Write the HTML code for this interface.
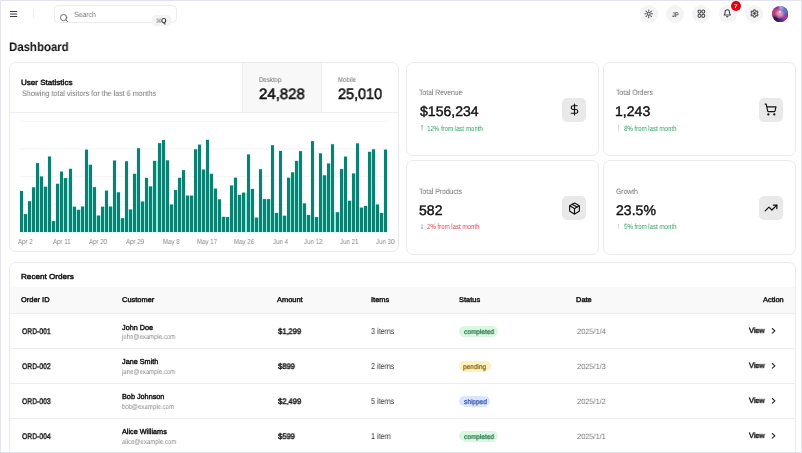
<!DOCTYPE html>
<html><head><meta charset="utf-8"><style>
html,body{margin:0;padding:0;}
body{width:802px;height:453px;position:relative;overflow:hidden;background:#fff;font-family:"Liberation Sans",sans-serif;}
.t{position:absolute;white-space:nowrap;text-rendering:geometricPrecision;will-change:transform;}
.frame{position:absolute;left:0;top:0;width:802px;height:453px;box-sizing:border-box;border:1px solid #e2e2f0;pointer-events:none}
</style></head><body>

<svg style="position:absolute;left:0;top:0" width="30" height="30"><g stroke="#3a3a3a" stroke-width="1.05" stroke-linecap="round"><line x1="10.4" x2="16.8" y1="11.4" y2="11.4"/><line x1="10.4" x2="16.8" y1="13.9" y2="13.9"/><line x1="10.4" x2="16.8" y1="16.4" y2="16.4"/></g></svg>
<div style="position:absolute;left:33px;top:10px;width:1px;height:8px;background:#ececec"></div>
<div style="position:absolute;left:54px;top:5px;width:122.8px;height:17.6px;border:1px solid #ececec;border-radius:4.5px;box-sizing:border-box"></div>
<svg style="position:absolute;left:59.3px;top:13.3px" width="10" height="10" viewBox="0 0 24 24" fill="none" stroke="#666" stroke-width="2.3" stroke-linecap="round"><circle cx="11" cy="11" r="7.5"/><path d="m21 21-4.3-4.3"/></svg>
<div style="position:absolute;left:152px;top:15px;width:18.6px;height:10.5px;background:#f3f3f3;border-radius:4px"></div>
<svg style="position:absolute;left:155.8px;top:17.6px" width="5.6" height="5.6" viewBox="0 0 24 24" fill="none" stroke="#aaa" stroke-width="3.5"><path d="M15 6v12a3 3 0 1 0 3-3H6a3 3 0 1 0 3 3V6a3 3 0 1 0-3 3h12a3 3 0 1 0-3-3"/></svg>
<div class="t" style="left:74.36px;top:11.00px;font-size:7.53px;line-height:7.53px;color:#7a7a7a;font-weight:400;transform:scaleX(0.9139);transform-origin:left top;">Search</div><div class="t" style="left:161.41px;top:18.00px;font-size:7.14px;line-height:7.14px;color:#333;font-weight:700;transform:scaleX(1.0000);transform-origin:left top;background:#f3f3f3;">Q</div><div style="position:absolute;left:639.7px;top:4.8px;width:18px;height:18px;border-radius:50%;background:#f4f4f4"></div><div style="position:absolute;left:666.2px;top:4.8px;width:18px;height:18px;border-radius:50%;background:#f4f4f4"></div><div style="position:absolute;left:692.4px;top:4.8px;width:18px;height:18px;border-radius:50%;background:#f4f4f4"></div><div style="position:absolute;left:719.0px;top:4.8px;width:18px;height:18px;border-radius:50%;background:#f4f4f4"></div><div style="position:absolute;left:745.0px;top:4.8px;width:18px;height:18px;border-radius:50%;background:#f4f4f4"></div><svg style="position:absolute;left:0;top:0" width="802" height="30" fill="none" stroke="#555" stroke-width="1.05" stroke-linecap="round"><circle cx="648.7" cy="13.8" r="1.55"/><path d="M651.50 13.80L652.60 13.80M650.68 15.78L651.46 16.56M648.70 16.60L648.70 17.70M646.72 15.78L645.94 16.56M645.90 13.80L644.80 13.80M646.72 11.82L645.94 11.04M648.70 11.00L648.70 9.90M650.68 11.82L651.46 11.04"/></svg><div class="t" style="left:671.89px;top:13.00px;font-size:6.81px;line-height:6.81px;color:#505050;font-weight:700;transform:scaleX(0.8031);transform-origin:left top;background:#f4f4f4;">JP</div><svg style="position:absolute;left:0;top:0" width="802" height="30" fill="none" stroke="#444" stroke-width="1.05"><ellipse cx="699.5" cy="11.6" rx="1.5" ry="1.6"/><ellipse cx="703.3" cy="11.6" rx="1.5" ry="1.6"/><ellipse cx="699.5" cy="15.8" rx="1.5" ry="1.6"/><ellipse cx="703.3" cy="15.8" rx="1.5" ry="1.6"/></svg><svg style="position:absolute;left:723.4px;top:9.4px" width="8.6" height="8.6" viewBox="0 0 24 24" fill="none" stroke="#444" stroke-width="3" stroke-linecap="round" stroke-linejoin="round"><path d="M6 8a6 6 0 0 1 12 0c0 7 3 9 3 9H3s3-2 3-9"/><path d="M10.3 21a1.94 1.94 0 0 0 3.4 0"/></svg><div style="position:absolute;left:730.9px;top:0.9px;width:9.9px;height:9.9px;border-radius:50%;background:#e0000f"></div><div class="t" style="left:734.04px;top:5.00px;font-size:5.22px;line-height:5.22px;color:#fff;font-weight:700;transform:scaleX(1.2234);transform-origin:left top;background:#e0000f;">7</div><svg style="position:absolute;left:749.6px;top:9.4px" width="9" height="9" viewBox="0 0 24 24" fill="none" stroke="#555" stroke-width="3.2" stroke-linecap="round" stroke-linejoin="round"><path d="M12.22 2h-.44a2 2 0 0 0-2 2v.18a2 2 0 0 1-1 1.73l-.43.25a2 2 0 0 1-2 0l-.15-.08a2 2 0 0 0-2.730.73l-.22.38a2 2 0 0 0 .73 2.73l.15.1a2 2 0 0 1 1 1.72v.51a2 2 0 0 1-1 1.740l-.15.09a2 2 0 0 0-.73 2.73l.22.38a2 2 0 0 0 2.73.73l.15-.08a2 2 0 0 1 2 0l.43.25a2 2 0 0 1 1 1.73V20a2 2 0 0 0 2 2h.44a2 2 0 0 0 2-2v-.18a2 2 0 0 1 1-1.73l.43-.25a2 2 0 0 1 2 0l.15.08a2 2 0 0 0 2.73-.73l.22-.39a2 2 0 0 0-.73-2.73l-.15-.08a2 2 0 0 1-1-1.74v-.5a2 2 0 0 1 1-1.74l.15-.09a2 2 0 0 0 .73-2.73l-.22-.38a2 2 0 0 0-2.73-.73l-.15.08a2 2 0 0 1-2 0l-.43-.25a2 2 0 0 1-1-1.73V4a2 2 0 0 0-2-2z"/><circle cx="12" cy="12" r="2.2" fill="#555"/></svg><svg style="position:absolute;left:771.6px;top:5.9px" width="16.2" height="16.2" viewBox="0 0 16 16"><defs><clipPath id="av"><circle cx="8" cy="8" r="8"/></clipPath><filter id="bl" x="-50%" y="-50%" width="200%" height="200%"><feGaussianBlur stdDeviation="1.1"/></filter></defs><g clip-path="url(#av)"><rect width="16" height="16" fill="#6a3090"/><g filter="url(#bl)"><circle cx="3" cy="6" r="4" fill="#c03a7a"/><circle cx="8" cy="7.5" r="3.6" fill="#e898b4"/><circle cx="13" cy="5" r="3.2" fill="#5a78d0"/><circle cx="9" cy="1" r="2.5" fill="#a8b8e8"/><circle cx="4" cy="13.5" r="3.8" fill="#2a1858"/><circle cx="13" cy="12" r="3" fill="#a83898"/><circle cx="9" cy="14" r="2.5" fill="#4a2a8a"/></g><circle cx="8" cy="5.8" r="0.9" fill="#f4f0ff" opacity="0.9"/><circle cx="6" cy="11" r="0.5" fill="#e0d0f0" opacity="0.8"/></g></svg><div class="t" style="left:9.00px;top:41.00px;font-size:12.33px;line-height:12.33px;color:#111;font-weight:700;transform:scaleX(0.9274);transform-origin:left top;">Dashboard</div><div style="position:absolute;left:9.0px;top:61.95px;width:389.70px;height:190.45px;border:1px solid #ebebeb;border-radius:7px;box-sizing:border-box;background:#fff"></div><div style="position:absolute;left:242px;top:63.2px;width:80px;height:49.3px;background:#f8f8f8;border-left:1px solid #eeeeee;border-right:1px solid #eeeeee;box-sizing:border-box"></div><div style="position:absolute;left:10.2px;top:112px;width:387.4px;height:1px;background:#eeeeee"></div><div class="t" style="left:21.48px;top:79.00px;font-size:7.53px;line-height:7.53px;color:#171717;font-weight:400;transform:scaleX(1.0711);transform-origin:left top;-webkit-text-stroke:0.45px #171717;">User Statistics</div><div class="t" style="left:21.64px;top:90.00px;font-size:7.95px;line-height:7.95px;color:#777;font-weight:400;transform:scaleX(0.9021);transform-origin:left top;">Showing total visitors for the last 6 months</div><div class="t" style="left:258.71px;top:77.00px;font-size:6.99px;line-height:6.99px;color:#6e6e6e;font-weight:400;transform:scaleX(0.8709);transform-origin:left top;background:#f8f8f8;">Desktop</div><div class="t" style="left:337.61px;top:77.00px;font-size:6.99px;line-height:6.99px;color:#6e6e6e;font-weight:400;transform:scaleX(0.8709);transform-origin:left top;">Mobile</div><div class="t" style="left:259.03px;top:87.00px;font-size:15.18px;line-height:15.18px;color:#111;font-weight:400;transform:scaleX(0.9871);transform-origin:left top;-webkit-text-stroke:0.55px #111;background:#f8f8f8;">24,828</div><div class="t" style="left:337.75px;top:87.00px;font-size:15.18px;line-height:15.18px;color:#111;font-weight:400;transform:scaleX(0.9505);transform-origin:left top;-webkit-text-stroke:0.55px #111;">25,010</div><svg style="position:absolute;left:0;top:0" width="802" height="453"><g stroke="#f4f4f4" stroke-width="1"><line x1="19.5" x2="387.6" y1="204.30" y2="204.30"/><line x1="19.5" x2="387.6" y1="176.60" y2="176.60"/><line x1="19.5" x2="387.6" y1="148.90" y2="148.90"/><line x1="19.5" x2="387.6" y1="121.20" y2="121.20"/></g><g fill="none" stroke="#c8f7f1" stroke-width="1.0"><rect x="20" y="191.00" width="3" height="41.00"/><rect x="24" y="214.09" width="3" height="17.91"/><rect x="28" y="201.16" width="3" height="30.84"/><rect x="32" y="187.31" width="3" height="44.69"/><rect x="36" y="163.12" width="3" height="68.88"/><rect x="40" y="176.42" width="3" height="55.58"/><rect x="44" y="186.76" width="3" height="45.24"/><rect x="48" y="156.47" width="3" height="75.53"/><rect x="52" y="221.10" width="3" height="10.90"/><rect x="56" y="183.80" width="3" height="48.20"/><rect x="60" y="171.61" width="3" height="60.39"/><rect x="64" y="178.08" width="3" height="53.92"/><rect x="69" y="168.84" width="3" height="63.16"/><rect x="73" y="206.70" width="3" height="25.30"/><rect x="77" y="209.84" width="3" height="22.16"/><rect x="81" y="206.52" width="3" height="25.48"/><rect x="85" y="149.64" width="3" height="82.36"/><rect x="89" y="164.78" width="3" height="67.22"/><rect x="93" y="187.13" width="3" height="44.87"/><rect x="97" y="215.56" width="3" height="16.44"/><rect x="101" y="206.70" width="3" height="25.30"/><rect x="105" y="190.63" width="3" height="41.37"/><rect x="109" y="206.52" width="3" height="25.48"/><rect x="113" y="160.53" width="3" height="71.47"/><rect x="117" y="192.30" width="3" height="39.70"/><rect x="121" y="218.15" width="3" height="13.85"/><rect x="125" y="161.27" width="3" height="70.73"/><rect x="129" y="209.47" width="3" height="22.53"/><rect x="133" y="173.83" width="3" height="58.17"/><rect x="137" y="148.16" width="3" height="83.84"/><rect x="141" y="201.53" width="3" height="30.47"/><rect x="145" y="177.89" width="3" height="54.11"/><rect x="149" y="186.39" width="3" height="45.61"/><rect x="153" y="160.90" width="3" height="71.10"/><rect x="158" y="143.18" width="3" height="88.82"/><rect x="162" y="140.04" width="3" height="91.96"/><rect x="166" y="160.35" width="3" height="71.65"/><rect x="170" y="204.48" width="3" height="27.52"/><rect x="174" y="190.08" width="3" height="41.92"/><rect x="178" y="177.89" width="3" height="54.11"/><rect x="182" y="170.14" width="3" height="61.86"/><rect x="186" y="195.62" width="3" height="36.38"/><rect x="190" y="195.62" width="3" height="36.38"/><rect x="194" y="149.27" width="3" height="82.73"/><rect x="198" y="144.65" width="3" height="87.35"/><rect x="202" y="169.58" width="3" height="62.42"/><rect x="206" y="139.85" width="3" height="92.15"/><rect x="210" y="173.83" width="3" height="58.17"/><rect x="214" y="188.60" width="3" height="43.40"/><rect x="218" y="199.31" width="3" height="32.69"/><rect x="222" y="216.86" width="3" height="15.14"/><rect x="226" y="217.04" width="3" height="14.96"/><rect x="230" y="185.46" width="3" height="46.54"/><rect x="234" y="177.71" width="3" height="54.29"/><rect x="238" y="194.88" width="3" height="37.12"/><rect x="242" y="192.67" width="3" height="39.33"/><rect x="247" y="154.44" width="3" height="77.56"/><rect x="251" y="188.97" width="3" height="43.03"/><rect x="255" y="217.60" width="3" height="14.40"/><rect x="259" y="169.21" width="3" height="62.79"/><rect x="263" y="199.13" width="3" height="32.87"/><rect x="267" y="199.13" width="3" height="32.87"/><rect x="271" y="145.21" width="3" height="86.79"/><rect x="275" y="212.98" width="3" height="19.02"/><rect x="279" y="150.93" width="3" height="81.07"/><rect x="283" y="215.75" width="3" height="16.25"/><rect x="287" y="177.71" width="3" height="54.29"/><rect x="291" y="172.35" width="3" height="59.65"/><rect x="295" y="160.90" width="3" height="71.10"/><rect x="299" y="151.12" width="3" height="80.88"/><rect x="303" y="203.38" width="3" height="28.62"/><rect x="307" y="215.01" width="3" height="16.99"/><rect x="311" y="141.14" width="3" height="90.86"/><rect x="315" y="217.04" width="3" height="14.96"/><rect x="319" y="153.33" width="3" height="78.67"/><rect x="323" y="175.31" width="3" height="56.69"/><rect x="327" y="163.49" width="3" height="68.51"/><rect x="331" y="144.28" width="3" height="87.72"/><rect x="336" y="212.24" width="3" height="19.76"/><rect x="340" y="169.03" width="3" height="62.97"/><rect x="344" y="156.66" width="3" height="75.34"/><rect x="348" y="200.79" width="3" height="31.21"/><rect x="352" y="173.46" width="3" height="58.54"/><rect x="356" y="143.36" width="3" height="88.64"/><rect x="360" y="207.62" width="3" height="24.38"/><rect x="364" y="205.96" width="3" height="26.04"/><rect x="368" y="151.85" width="3" height="80.15"/><rect x="372" y="149.27" width="3" height="82.73"/><rect x="376" y="204.48" width="3" height="27.52"/><rect x="380" y="212.98" width="3" height="19.02"/><rect x="384" y="149.64" width="3" height="82.36"/></g><g fill="#8ef0e2"><rect x="23" y="214.09" width="1" height="17.91"/><rect x="27" y="214.09" width="1" height="17.91"/><rect x="31" y="201.16" width="1" height="30.84"/><rect x="35" y="187.31" width="1" height="44.69"/><rect x="39" y="176.42" width="1" height="55.58"/><rect x="43" y="186.76" width="1" height="45.24"/><rect x="47" y="186.76" width="1" height="45.24"/><rect x="51" y="221.10" width="1" height="10.90"/><rect x="55" y="221.10" width="1" height="10.90"/><rect x="59" y="183.80" width="1" height="48.20"/><rect x="63" y="178.08" width="1" height="53.92"/><rect x="67" y="178.08" width="2" height="53.92"/><rect x="72" y="206.70" width="1" height="25.30"/><rect x="76" y="209.84" width="1" height="22.16"/><rect x="80" y="209.84" width="1" height="22.16"/><rect x="84" y="206.52" width="1" height="25.48"/><rect x="88" y="164.78" width="1" height="67.22"/><rect x="92" y="187.13" width="1" height="44.87"/><rect x="96" y="215.56" width="1" height="16.44"/><rect x="100" y="215.56" width="1" height="16.44"/><rect x="104" y="206.70" width="1" height="25.30"/><rect x="108" y="206.52" width="1" height="25.48"/><rect x="112" y="206.52" width="1" height="25.48"/><rect x="116" y="192.30" width="1" height="39.70"/><rect x="120" y="218.15" width="1" height="13.85"/><rect x="124" y="218.15" width="1" height="13.85"/><rect x="128" y="209.47" width="1" height="22.53"/><rect x="132" y="209.47" width="1" height="22.53"/><rect x="136" y="173.83" width="1" height="58.17"/><rect x="140" y="201.53" width="1" height="30.47"/><rect x="144" y="201.53" width="1" height="30.47"/><rect x="148" y="186.39" width="1" height="45.61"/><rect x="152" y="186.39" width="1" height="45.61"/><rect x="156" y="160.90" width="2" height="71.10"/><rect x="161" y="143.18" width="1" height="88.82"/><rect x="165" y="160.35" width="1" height="71.65"/><rect x="169" y="204.48" width="1" height="27.52"/><rect x="173" y="204.48" width="1" height="27.52"/><rect x="177" y="190.08" width="1" height="41.92"/><rect x="181" y="177.89" width="1" height="54.11"/><rect x="185" y="195.62" width="1" height="36.38"/><rect x="189" y="195.62" width="1" height="36.38"/><rect x="193" y="195.62" width="1" height="36.38"/><rect x="197" y="149.27" width="1" height="82.73"/><rect x="201" y="169.58" width="1" height="62.42"/><rect x="205" y="169.58" width="1" height="62.42"/><rect x="209" y="173.83" width="1" height="58.17"/><rect x="213" y="188.60" width="1" height="43.40"/><rect x="217" y="199.31" width="1" height="32.69"/><rect x="221" y="216.86" width="1" height="15.14"/><rect x="225" y="217.04" width="1" height="14.96"/><rect x="229" y="217.04" width="1" height="14.96"/><rect x="233" y="185.46" width="1" height="46.54"/><rect x="237" y="194.88" width="1" height="37.12"/><rect x="241" y="194.88" width="1" height="37.12"/><rect x="245" y="192.67" width="2" height="39.33"/><rect x="250" y="188.97" width="1" height="43.03"/><rect x="254" y="217.60" width="1" height="14.40"/><rect x="258" y="217.60" width="1" height="14.40"/><rect x="262" y="199.13" width="1" height="32.87"/><rect x="266" y="199.13" width="1" height="32.87"/><rect x="270" y="199.13" width="1" height="32.87"/><rect x="274" y="212.98" width="1" height="19.02"/><rect x="278" y="212.98" width="1" height="19.02"/><rect x="282" y="215.75" width="1" height="16.25"/><rect x="286" y="215.75" width="1" height="16.25"/><rect x="290" y="177.71" width="1" height="54.29"/><rect x="294" y="172.35" width="1" height="59.65"/><rect x="298" y="160.90" width="1" height="71.10"/><rect x="302" y="203.38" width="1" height="28.62"/><rect x="306" y="215.01" width="1" height="16.99"/><rect x="310" y="215.01" width="1" height="16.99"/><rect x="314" y="217.04" width="1" height="14.96"/><rect x="318" y="217.04" width="1" height="14.96"/><rect x="322" y="175.31" width="1" height="56.69"/><rect x="326" y="175.31" width="1" height="56.69"/><rect x="330" y="163.49" width="1" height="68.51"/><rect x="334" y="212.24" width="2" height="19.76"/><rect x="339" y="212.24" width="1" height="19.76"/><rect x="343" y="169.03" width="1" height="62.97"/><rect x="347" y="200.79" width="1" height="31.21"/><rect x="351" y="200.79" width="1" height="31.21"/><rect x="355" y="173.46" width="1" height="58.54"/><rect x="359" y="207.62" width="1" height="24.38"/><rect x="363" y="207.62" width="1" height="24.38"/><rect x="367" y="205.96" width="1" height="26.04"/><rect x="371" y="151.85" width="1" height="80.15"/><rect x="375" y="204.48" width="1" height="27.52"/><rect x="379" y="212.98" width="1" height="19.02"/><rect x="383" y="212.98" width="1" height="19.02"/></g><g fill="#0f7f72"><rect x="20" y="191.00" width="3" height="41.00"/><rect x="24" y="214.09" width="3" height="17.91"/><rect x="28" y="201.16" width="3" height="30.84"/><rect x="32" y="187.31" width="3" height="44.69"/><rect x="36" y="163.12" width="3" height="68.88"/><rect x="40" y="176.42" width="3" height="55.58"/><rect x="44" y="186.76" width="3" height="45.24"/><rect x="48" y="156.47" width="3" height="75.53"/><rect x="52" y="221.10" width="3" height="10.90"/><rect x="56" y="183.80" width="3" height="48.20"/><rect x="60" y="171.61" width="3" height="60.39"/><rect x="64" y="178.08" width="3" height="53.92"/><rect x="69" y="168.84" width="3" height="63.16"/><rect x="73" y="206.70" width="3" height="25.30"/><rect x="77" y="209.84" width="3" height="22.16"/><rect x="81" y="206.52" width="3" height="25.48"/><rect x="85" y="149.64" width="3" height="82.36"/><rect x="89" y="164.78" width="3" height="67.22"/><rect x="93" y="187.13" width="3" height="44.87"/><rect x="97" y="215.56" width="3" height="16.44"/><rect x="101" y="206.70" width="3" height="25.30"/><rect x="105" y="190.63" width="3" height="41.37"/><rect x="109" y="206.52" width="3" height="25.48"/><rect x="113" y="160.53" width="3" height="71.47"/><rect x="117" y="192.30" width="3" height="39.70"/><rect x="121" y="218.15" width="3" height="13.85"/><rect x="125" y="161.27" width="3" height="70.73"/><rect x="129" y="209.47" width="3" height="22.53"/><rect x="133" y="173.83" width="3" height="58.17"/><rect x="137" y="148.16" width="3" height="83.84"/><rect x="141" y="201.53" width="3" height="30.47"/><rect x="145" y="177.89" width="3" height="54.11"/><rect x="149" y="186.39" width="3" height="45.61"/><rect x="153" y="160.90" width="3" height="71.10"/><rect x="158" y="143.18" width="3" height="88.82"/><rect x="162" y="140.04" width="3" height="91.96"/><rect x="166" y="160.35" width="3" height="71.65"/><rect x="170" y="204.48" width="3" height="27.52"/><rect x="174" y="190.08" width="3" height="41.92"/><rect x="178" y="177.89" width="3" height="54.11"/><rect x="182" y="170.14" width="3" height="61.86"/><rect x="186" y="195.62" width="3" height="36.38"/><rect x="190" y="195.62" width="3" height="36.38"/><rect x="194" y="149.27" width="3" height="82.73"/><rect x="198" y="144.65" width="3" height="87.35"/><rect x="202" y="169.58" width="3" height="62.42"/><rect x="206" y="139.85" width="3" height="92.15"/><rect x="210" y="173.83" width="3" height="58.17"/><rect x="214" y="188.60" width="3" height="43.40"/><rect x="218" y="199.31" width="3" height="32.69"/><rect x="222" y="216.86" width="3" height="15.14"/><rect x="226" y="217.04" width="3" height="14.96"/><rect x="230" y="185.46" width="3" height="46.54"/><rect x="234" y="177.71" width="3" height="54.29"/><rect x="238" y="194.88" width="3" height="37.12"/><rect x="242" y="192.67" width="3" height="39.33"/><rect x="247" y="154.44" width="3" height="77.56"/><rect x="251" y="188.97" width="3" height="43.03"/><rect x="255" y="217.60" width="3" height="14.40"/><rect x="259" y="169.21" width="3" height="62.79"/><rect x="263" y="199.13" width="3" height="32.87"/><rect x="267" y="199.13" width="3" height="32.87"/><rect x="271" y="145.21" width="3" height="86.79"/><rect x="275" y="212.98" width="3" height="19.02"/><rect x="279" y="150.93" width="3" height="81.07"/><rect x="283" y="215.75" width="3" height="16.25"/><rect x="287" y="177.71" width="3" height="54.29"/><rect x="291" y="172.35" width="3" height="59.65"/><rect x="295" y="160.90" width="3" height="71.10"/><rect x="299" y="151.12" width="3" height="80.88"/><rect x="303" y="203.38" width="3" height="28.62"/><rect x="307" y="215.01" width="3" height="16.99"/><rect x="311" y="141.14" width="3" height="90.86"/><rect x="315" y="217.04" width="3" height="14.96"/><rect x="319" y="153.33" width="3" height="78.67"/><rect x="323" y="175.31" width="3" height="56.69"/><rect x="327" y="163.49" width="3" height="68.51"/><rect x="331" y="144.28" width="3" height="87.72"/><rect x="336" y="212.24" width="3" height="19.76"/><rect x="340" y="169.03" width="3" height="62.97"/><rect x="344" y="156.66" width="3" height="75.34"/><rect x="348" y="200.79" width="3" height="31.21"/><rect x="352" y="173.46" width="3" height="58.54"/><rect x="356" y="143.36" width="3" height="88.64"/><rect x="360" y="207.62" width="3" height="24.38"/><rect x="364" y="205.96" width="3" height="26.04"/><rect x="368" y="151.85" width="3" height="80.15"/><rect x="372" y="149.27" width="3" height="82.73"/><rect x="376" y="204.48" width="3" height="27.52"/><rect x="380" y="212.98" width="3" height="19.02"/><rect x="384" y="149.64" width="3" height="82.36"/></g></svg><div class="t" style="left:18.37px;top:238.00px;font-size:7.25px;line-height:7.25px;color:#888;font-weight:400;transform:scaleX(0.8466);transform-origin:left top;">Apr 2</div><div class="t" style="left:53.30px;top:238.00px;font-size:7.25px;line-height:7.25px;color:#888;font-weight:400;transform:scaleX(0.8466);transform-origin:left top;">Apr 11</div><div class="t" style="left:89.43px;top:238.00px;font-size:7.25px;line-height:7.25px;color:#888;font-weight:400;transform:scaleX(0.8466);transform-origin:left top;">Apr 20</div><div class="t" style="left:125.87px;top:238.00px;font-size:7.25px;line-height:7.25px;color:#888;font-weight:400;transform:scaleX(0.8466);transform-origin:left top;">Apr 29</div><div class="t" style="left:162.70px;top:238.00px;font-size:7.25px;line-height:7.25px;color:#888;font-weight:400;transform:scaleX(0.8466);transform-origin:left top;">May 8</div><div class="t" style="left:197.42px;top:238.00px;font-size:7.25px;line-height:7.25px;color:#888;font-weight:400;transform:scaleX(0.8466);transform-origin:left top;">May 17</div><div class="t" style="left:233.82px;top:238.00px;font-size:7.25px;line-height:7.25px;color:#888;font-weight:400;transform:scaleX(0.8466);transform-origin:left top;">May 26</div><div class="t" style="left:272.90px;top:238.00px;font-size:7.25px;line-height:7.25px;color:#888;font-weight:400;transform:scaleX(0.8466);transform-origin:left top;">Jun 4</div><div class="t" style="left:303.63px;top:238.00px;font-size:7.25px;line-height:7.25px;color:#888;font-weight:400;transform:scaleX(0.8466);transform-origin:left top;">Jun 12</div><div class="t" style="left:340.04px;top:238.00px;font-size:7.25px;line-height:7.25px;color:#888;font-weight:400;transform:scaleX(0.8466);transform-origin:left top;">Jun 21</div><div class="t" style="left:376.41px;top:238.00px;font-size:7.25px;line-height:7.25px;color:#888;font-weight:400;transform:scaleX(0.8466);transform-origin:left top;">Jun 30</div><div style="position:absolute;left:406.1px;top:61.95px;width:193.30px;height:94.45px;border:1px solid #ebebeb;border-radius:7px;box-sizing:border-box;background:#fff"></div><div class="t" style="left:419.36px;top:89.00px;font-size:7.81px;line-height:7.81px;color:#737373;font-weight:400;transform:scaleX(0.8700);transform-origin:left top;">Total Revenue</div><div class="t" style="left:419.87px;top:104.00px;font-size:13.99px;line-height:13.99px;color:#111;font-weight:400;transform:scaleX(1.0058);transform-origin:left top;-webkit-text-stroke:0.42px #111;">$156,234</div><div style="position:absolute;left:421.1px;top:125.2px;width:1.7px;height:5.7px;background:linear-gradient(#b4b4b4,#dcdcdc 45%,#e4e4e4)"></div><div class="t" style="left:427.01px;top:125.00px;font-size:7.53px;line-height:7.53px;color:#2f9e5f;font-weight:400;transform:scaleX(0.8099);transform-origin:left top;">12% from last month</div><div style="position:absolute;left:562.2px;top:97.6px;width:24px;height:24px;border-radius:5px;background:#e9e9e9"></div><svg style="position:absolute;left:567.7px;top:103.1px" width="13" height="13" viewBox="0 0 24 24" fill="none" stroke="#111" stroke-width="2.15" stroke-linecap="round" stroke-linejoin="round"><line x1="12" x2="12" y1="2" y2="22"/><path d="M17 5H9.5a3.5 3.5 0 0 0 0 7h5a3.5 3.5 0 0 1 0 7H6"/></svg><div style="position:absolute;left:602.7px;top:61.95px;width:193.30px;height:94.45px;border:1px solid #ebebeb;border-radius:7px;box-sizing:border-box;background:#fff"></div><div class="t" style="left:615.76px;top:89.00px;font-size:7.81px;line-height:7.81px;color:#737373;font-weight:400;transform:scaleX(0.8700);transform-origin:left top;">Total Orders</div><div class="t" style="left:615.28px;top:104.00px;font-size:13.99px;line-height:13.99px;color:#111;font-weight:400;transform:scaleX(1.0058);transform-origin:left top;-webkit-text-stroke:0.42px #111;">1,243</div><div style="position:absolute;left:617.5px;top:125.2px;width:1.7px;height:5.7px;background:linear-gradient(#b4b4b4,#dcdcdc 45%,#e4e4e4)"></div><div class="t" style="left:623.66px;top:125.00px;font-size:7.53px;line-height:7.53px;color:#2f9e5f;font-weight:400;transform:scaleX(0.8099);transform-origin:left top;">8% from last month</div><div style="position:absolute;left:758.8px;top:97.6px;width:24px;height:24px;border-radius:5px;background:#e9e9e9"></div><svg style="position:absolute;left:764.3px;top:103.1px" width="13" height="13" viewBox="0 0 24 24" fill="none" stroke="#111" stroke-width="2.15" stroke-linecap="round" stroke-linejoin="round"><circle cx="8" cy="21" r="1"/><circle cx="19" cy="21" r="1"/><path d="M2.05 2.05h2l2.66 12.42a2 2 0 0 0 2 1.58h9.78a2 2 0 0 0 1.95-1.57l1.65-7.43H5.12"/></svg><div style="position:absolute;left:406.1px;top:160.1px;width:193.30px;height:94.60px;border:1px solid #ebebeb;border-radius:7px;box-sizing:border-box;background:#fff"></div><div class="t" style="left:419.36px;top:188.00px;font-size:7.81px;line-height:7.81px;color:#737373;font-weight:400;transform:scaleX(0.8700);transform-origin:left top;">Total Products</div><div class="t" style="left:419.45px;top:203.00px;font-size:13.99px;line-height:13.99px;color:#111;font-weight:400;transform:scaleX(1.0058);transform-origin:left top;-webkit-text-stroke:0.42px #111;">582</div><div style="position:absolute;left:421.1px;top:223.8px;width:1.7px;height:5.7px;background:linear-gradient(#e4e4e4,#dcdcdc 55%,#b4b4b4)"></div><div class="t" style="left:427.19px;top:223.00px;font-size:7.53px;line-height:7.53px;color:#d9434e;font-weight:400;transform:scaleX(0.8099);transform-origin:left top;">2% from last month</div><div style="position:absolute;left:562.2px;top:196.2px;width:24px;height:24px;border-radius:5px;background:#e9e9e9"></div><svg style="position:absolute;left:567.7px;top:201.7px" width="13" height="13" viewBox="0 0 24 24" fill="none" stroke="#111" stroke-width="2.15" stroke-linecap="round" stroke-linejoin="round"><path d="M11 21.73a2 2 0 0 0 2 0l7-4A2 2 0 0 0 21 16V8a2 2 0 0 0-1-1.73l-7-4a2 2 0 0 0-2 0l-7 4A2 2 0 0 0 3 8v8a2 2 0 0 0 1 1.73z"/><path d="M12 22V12"/><path d="m3.3 7 7.703 4.734a2 2 0 0 0 1.994 0L20.7 7"/><path d="m7.5 4.27 9 5.15"/></svg><div style="position:absolute;left:602.7px;top:160.1px;width:193.30px;height:94.60px;border:1px solid #ebebeb;border-radius:7px;box-sizing:border-box;background:#fff"></div><div class="t" style="left:615.56px;top:188.00px;font-size:7.81px;line-height:7.81px;color:#737373;font-weight:400;transform:scaleX(0.8700);transform-origin:left top;">Growth</div><div class="t" style="left:615.71px;top:203.00px;font-size:13.99px;line-height:13.99px;color:#111;font-weight:400;transform:scaleX(1.0058);transform-origin:left top;-webkit-text-stroke:0.42px #111;">23.5%</div><div style="position:absolute;left:617.5px;top:223.8px;width:1.7px;height:5.7px;background:linear-gradient(#b4b4b4,#dcdcdc 45%,#e4e4e4)"></div><div class="t" style="left:623.66px;top:223.00px;font-size:7.53px;line-height:7.53px;color:#2f9e5f;font-weight:400;transform:scaleX(0.8099);transform-origin:left top;">5% from last month</div><div style="position:absolute;left:758.8px;top:196.2px;width:24px;height:24px;border-radius:5px;background:#e9e9e9"></div><svg style="position:absolute;left:763.8px;top:201.2px" width="14" height="14" viewBox="0 0 24 24" fill="none" stroke="#111" stroke-width="2.15" stroke-linecap="round" stroke-linejoin="round"><polyline points="22 7 13.5 15.5 8.5 10.5 2 17"/><polyline points="16 7 22 7 22 13"/></svg><div style="position:absolute;left:9.0px;top:262.3px;width:787px;height:230px;border:1px solid #ebebeb;border-radius:7px;box-sizing:border-box;background:#fff;overflow:hidden"><div style="position:absolute;left:0;top:23.3px;width:100%;height:27.5px;background:#f9f9f9;border-bottom:1px solid #eeeeee;box-sizing:border-box"></div><div style="position:absolute;left:0;top:84.6px;width:100%;height:1px;background:#ededed"></div><div style="position:absolute;left:0;top:119.5px;width:100%;height:1px;background:#ededed"></div><div style="position:absolute;left:0;top:154.4px;width:100%;height:1px;background:#ededed"></div></div><div class="t" style="left:21.37px;top:273.00px;font-size:7.26px;line-height:7.26px;color:#171717;font-weight:400;transform:scaleX(1.1209);transform-origin:left top;-webkit-text-stroke:0.45px #171717;">Recent Orders</div><div class="t" style="left:21.35px;top:298.00px;font-size:6.92px;line-height:6.92px;color:#1a1a1a;font-weight:400;transform:scaleX(1.0784);transform-origin:left top;-webkit-text-stroke:0.45px #1a1a1a;background:#f9f9f9;">Order ID</div><div class="t" style="left:122.05px;top:298.00px;font-size:6.92px;line-height:6.92px;color:#1a1a1a;font-weight:400;transform:scaleX(1.0784);transform-origin:left top;-webkit-text-stroke:0.45px #1a1a1a;background:#f9f9f9;">Customer</div><div class="t" style="left:277.43px;top:298.00px;font-size:6.92px;line-height:6.92px;color:#1a1a1a;font-weight:400;transform:scaleX(1.0784);transform-origin:left top;-webkit-text-stroke:0.45px #1a1a1a;background:#f9f9f9;">Amount</div><div class="t" style="left:370.85px;top:298.00px;font-size:6.92px;line-height:6.92px;color:#1a1a1a;font-weight:400;transform:scaleX(1.0784);transform-origin:left top;-webkit-text-stroke:0.45px #1a1a1a;background:#f9f9f9;">Items</div><div class="t" style="left:458.85px;top:298.00px;font-size:6.92px;line-height:6.92px;color:#1a1a1a;font-weight:400;transform:scaleX(1.0784);transform-origin:left top;-webkit-text-stroke:0.45px #1a1a1a;background:#f9f9f9;">Status</div><div class="t" style="left:576.43px;top:298.00px;font-size:6.92px;line-height:6.92px;color:#1a1a1a;font-weight:400;transform:scaleX(1.0784);transform-origin:left top;-webkit-text-stroke:0.45px #1a1a1a;background:#f9f9f9;">Date</div><div class="t" style="left:762.61px;top:298.00px;font-size:6.92px;line-height:6.92px;color:#1a1a1a;font-weight:400;transform:scaleX(1.0784);transform-origin:left top;-webkit-text-stroke:0.45px #1a1a1a;background:#f9f9f9;">Action</div><div class="t" style="left:21.58px;top:328.00px;font-size:8.14px;line-height:8.14px;color:#1a1a1a;font-weight:400;transform:scaleX(0.8376);transform-origin:left top;-webkit-text-stroke:0.45px #1a1a1a;">ORD-001</div><div class="t" style="left:122.28px;top:324.00px;font-size:7.26px;line-height:7.26px;color:#1a1a1a;font-weight:400;transform:scaleX(1.0020);transform-origin:left top;-webkit-text-stroke:0.45px #1a1a1a;">John Doe</div><div class="t" style="left:122.32px;top:334.00px;font-size:7.12px;line-height:7.12px;color:#8a8a8a;font-weight:400;transform:scaleX(0.8461);transform-origin:left top;">john@example.com</div><div class="t" style="left:277.65px;top:328.00px;font-size:8.00px;line-height:8.00px;color:#1a1a1a;font-weight:400;transform:scaleX(0.9500);transform-origin:left top;-webkit-text-stroke:0.45px #1a1a1a;">$1,299</div><div class="t" style="left:370.91px;top:327.00px;font-size:8.49px;line-height:8.49px;color:#333;font-weight:400;transform:scaleX(0.8522);transform-origin:left top;">3 items</div><div style="position:absolute;left:459px;top:325.8px;width:38.9px;height:10.8px;border-radius:5.4px;background:#d9f8e4"></div><div class="t" style="left:463.65px;top:330.00px;font-size:6.85px;line-height:6.85px;color:#1f6e42;font-weight:400;transform:scaleX(0.9518);transform-origin:left top;-webkit-text-stroke:0.22px #1f6e42;background:#d9f8e4;">completed</div><div class="t" style="left:576.53px;top:328.00px;font-size:7.67px;line-height:7.67px;color:#777;font-weight:400;transform:scaleX(0.9683);transform-origin:left top;">2025/1/4</div><div class="t" style="left:749.35px;top:327.00px;font-size:7.53px;line-height:7.53px;color:#1a1a1a;font-weight:400;transform:scaleX(0.9613);transform-origin:left top;-webkit-text-stroke:0.45px #1a1a1a;">View</div><svg style="position:absolute;left:0;top:0.0px" width="802" height="453" fill="none" stroke="#222" stroke-width="1.1" stroke-linecap="round" stroke-linejoin="round"><path d="M772.3 328.5 l2.6 2.3 -2.6 2.3"/></svg><div class="t" style="left:21.58px;top:363.00px;font-size:8.14px;line-height:8.14px;color:#1a1a1a;font-weight:400;transform:scaleX(0.8376);transform-origin:left top;-webkit-text-stroke:0.45px #1a1a1a;">ORD-002</div><div class="t" style="left:122.28px;top:358.00px;font-size:7.26px;line-height:7.26px;color:#1a1a1a;font-weight:400;transform:scaleX(1.0020);transform-origin:left top;-webkit-text-stroke:0.45px #1a1a1a;">Jane Smith</div><div class="t" style="left:122.32px;top:369.00px;font-size:7.12px;line-height:7.12px;color:#8a8a8a;font-weight:400;transform:scaleX(0.8461);transform-origin:left top;">jane@example.com</div><div class="t" style="left:277.65px;top:363.00px;font-size:8.00px;line-height:8.00px;color:#1a1a1a;font-weight:400;transform:scaleX(0.9500);transform-origin:left top;-webkit-text-stroke:0.45px #1a1a1a;">$899</div><div class="t" style="left:370.84px;top:362.00px;font-size:8.49px;line-height:8.49px;color:#333;font-weight:400;transform:scaleX(0.8522);transform-origin:left top;">2 items</div><div style="position:absolute;left:459px;top:360.7px;width:32.4px;height:10.8px;border-radius:5.4px;background:#fdf1bd"></div><div class="t" style="left:463.45px;top:365.00px;font-size:6.85px;line-height:6.85px;color:#86601a;font-weight:400;transform:scaleX(0.9518);transform-origin:left top;-webkit-text-stroke:0.22px #86601a;background:#fdf1bd;">pending</div><div class="t" style="left:576.53px;top:363.00px;font-size:7.67px;line-height:7.67px;color:#777;font-weight:400;transform:scaleX(0.9683);transform-origin:left top;">2025/1/3</div><div class="t" style="left:749.35px;top:362.00px;font-size:7.53px;line-height:7.53px;color:#1a1a1a;font-weight:400;transform:scaleX(0.9613);transform-origin:left top;-webkit-text-stroke:0.45px #1a1a1a;">View</div><svg style="position:absolute;left:0;top:34.9px" width="802" height="453" fill="none" stroke="#222" stroke-width="1.1" stroke-linecap="round" stroke-linejoin="round"><path d="M772.3 328.5 l2.6 2.3 -2.6 2.3"/></svg><div class="t" style="left:21.58px;top:398.00px;font-size:8.14px;line-height:8.14px;color:#1a1a1a;font-weight:400;transform:scaleX(0.8376);transform-origin:left top;-webkit-text-stroke:0.45px #1a1a1a;">ORD-003</div><div class="t" style="left:121.84px;top:393.00px;font-size:7.26px;line-height:7.26px;color:#1a1a1a;font-weight:400;transform:scaleX(1.0020);transform-origin:left top;-webkit-text-stroke:0.45px #1a1a1a;">Bob Johnson</div><div class="t" style="left:121.78px;top:404.00px;font-size:7.12px;line-height:7.12px;color:#8a8a8a;font-weight:400;transform:scaleX(0.8461);transform-origin:left top;">bob@example.com</div><div class="t" style="left:277.65px;top:398.00px;font-size:8.00px;line-height:8.00px;color:#1a1a1a;font-weight:400;transform:scaleX(0.9500);transform-origin:left top;-webkit-text-stroke:0.45px #1a1a1a;">$2,499</div><div class="t" style="left:370.91px;top:397.00px;font-size:8.49px;line-height:8.49px;color:#333;font-weight:400;transform:scaleX(0.8522);transform-origin:left top;">5 items</div><div style="position:absolute;left:459px;top:395.6px;width:31.4px;height:10.8px;border-radius:5.4px;background:#dae6fc"></div><div class="t" style="left:463.71px;top:400.00px;font-size:6.85px;line-height:6.85px;color:#2a4cab;font-weight:400;transform:scaleX(0.9518);transform-origin:left top;-webkit-text-stroke:0.22px #2a4cab;background:#dae6fc;">shipped</div><div class="t" style="left:576.53px;top:398.00px;font-size:7.67px;line-height:7.67px;color:#777;font-weight:400;transform:scaleX(0.9683);transform-origin:left top;">2025/1/2</div><div class="t" style="left:749.35px;top:397.00px;font-size:7.53px;line-height:7.53px;color:#1a1a1a;font-weight:400;transform:scaleX(0.9613);transform-origin:left top;-webkit-text-stroke:0.45px #1a1a1a;">View</div><svg style="position:absolute;left:0;top:69.8px" width="802" height="453" fill="none" stroke="#222" stroke-width="1.1" stroke-linecap="round" stroke-linejoin="round"><path d="M772.3 328.5 l2.6 2.3 -2.6 2.3"/></svg><div class="t" style="left:21.58px;top:433.00px;font-size:8.14px;line-height:8.14px;color:#1a1a1a;font-weight:400;transform:scaleX(0.8376);transform-origin:left top;-webkit-text-stroke:0.45px #1a1a1a;">ORD-004</div><div class="t" style="left:122.42px;top:428.00px;font-size:7.26px;line-height:7.26px;color:#1a1a1a;font-weight:400;transform:scaleX(1.0020);transform-origin:left top;-webkit-text-stroke:0.45px #1a1a1a;">Alice Williams</div><div class="t" style="left:121.96px;top:439.00px;font-size:7.12px;line-height:7.12px;color:#8a8a8a;font-weight:400;transform:scaleX(0.8461);transform-origin:left top;">alice@example.com</div><div class="t" style="left:277.65px;top:433.00px;font-size:8.00px;line-height:8.00px;color:#1a1a1a;font-weight:400;transform:scaleX(0.9500);transform-origin:left top;-webkit-text-stroke:0.45px #1a1a1a;">$599</div><div class="t" style="left:370.62px;top:432.00px;font-size:8.49px;line-height:8.49px;color:#333;font-weight:400;transform:scaleX(0.8522);transform-origin:left top;">1 item</div><div style="position:absolute;left:459px;top:430.5px;width:38.9px;height:10.8px;border-radius:5.4px;background:#d9f8e4"></div><div class="t" style="left:463.65px;top:435.00px;font-size:6.85px;line-height:6.85px;color:#1f6e42;font-weight:400;transform:scaleX(0.9518);transform-origin:left top;-webkit-text-stroke:0.22px #1f6e42;background:#d9f8e4;">completed</div><div class="t" style="left:576.53px;top:433.00px;font-size:7.67px;line-height:7.67px;color:#777;font-weight:400;transform:scaleX(0.9683);transform-origin:left top;">2025/1/1</div><div class="t" style="left:749.35px;top:432.00px;font-size:7.53px;line-height:7.53px;color:#1a1a1a;font-weight:400;transform:scaleX(0.9613);transform-origin:left top;-webkit-text-stroke:0.45px #1a1a1a;">View</div><svg style="position:absolute;left:0;top:104.7px" width="802" height="453" fill="none" stroke="#222" stroke-width="1.1" stroke-linecap="round" stroke-linejoin="round"><path d="M772.3 328.5 l2.6 2.3 -2.6 2.3"/></svg>
<div class="frame"></div>
</body></html>
